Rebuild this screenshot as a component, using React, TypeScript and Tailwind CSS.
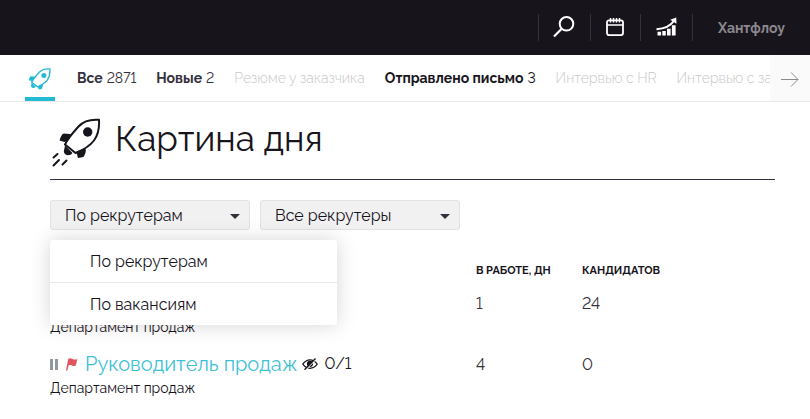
import { useState } from 'react';
import type { ReactNode } from 'react';

// ═══════════════════════════════════════════════════════════════════════════
// DATA
// ═══════════════════════════════════════════════════════════════════════════

interface Stage {
  title: string;
  count?: number;
  tone: 'dark' | 'active' | 'muted';
}

interface Vacancy {
  id: number;
  title?: string;
  department: string;
  progress?: string;
  days: number;
  candidates: number;
}

const STAGES: Stage[] = [
  { title: 'Все', count: 2871, tone: 'dark' },
  { title: 'Новые', count: 2, tone: 'dark' },
  { title: 'Резюме у заказчика', tone: 'muted' },
  { title: 'Отправлено письмо', count: 3, tone: 'active' },
  { title: 'Интервью с HR', tone: 'muted' },
  { title: 'Интервью с заказчиком', tone: 'muted' },
];

const VACANCIES: Vacancy[] = [
  { id: 1, department: 'Департамент продаж', days: 1, candidates: 24 },
  { id: 2, title: 'Руководитель продаж', department: 'Департамент продаж', progress: '0/1', days: 4, candidates: 0 },
];

const GROUPINGS = ['По рекрутерам', 'По вакансиям'];

const TONES = {
  dark: 'text-[#34313d]',
  active: 'text-[#17141c]',
  muted: 'text-[#c8c8c8]',
};

// ═══════════════════════════════════════════════════════════════════════════
// COMPONENT
// ═══════════════════════════════════════════════════════════════════════════

export default function App() {
  const [grouping, setGrouping] = useState(GROUPINGS[0]);
  const [menuOpen, setMenuOpen] = useState(true);

  return (
    <div className="overflow-hidden bg-white font-['Raleway','Lato',sans-serif] text-[#17141c] lining-nums">
      <TopBar />
      <StageNav />

      <main className="pr-[35px] pl-[50px]">
        <div className="flex h-[78px] items-start gap-3.5 border-b border-[#34313d] pt-4 pl-0.5">
          <RocketIcon className="h-[49px] w-[49px] shrink-0" flames />
          <h1 className="text-[35px] leading-[42px]">Картина дня</h1>
        </div>

        <div className="relative mt-5 flex gap-2.5">
          <FilterSelect
            label="Группировка"
            value={grouping}
            options={GROUPINGS}
            onChange={setGrouping}
          />
          <FilterSelect label="Рекрутеры" value="Все рекрутеры" options={['Все рекрутеры']} />

          {menuOpen && (
            <ul className="absolute top-10 left-0 z-10 w-[287px] divide-y divide-[#e8e8e8] rounded-[3px] bg-white shadow-[0_0_20px_rgba(0,0,0,0.17)]">
              {GROUPINGS.map((item) => (
                <li key={item}>
                  <button
                    type="button"
                    className="h-[42px] w-full px-10 pt-0.5 text-left text-base"
                    onClick={() => {
                      setGrouping(item);
                      setMenuOpen(false);
                    }}
                  >
                    {item}
                  </button>
                </li>
              ))}
            </ul>
          )}
        </div>

        <table className="mt-[29px] w-full table-fixed text-left">
          <thead>
            <tr className="h-6 text-[11px] font-bold">
              <th className="w-[426px]">
                <span className="sr-only">Вакансия</span>
              </th>
              <th className="w-[106px]">В РАБОТЕ, ДН</th>
              <th>КАНДИДАТОВ</th>
            </tr>
          </thead>
          <tbody>
            {VACANCIES.map((vacancy) => (
              <VacancyRow key={vacancy.id} vacancy={vacancy} />
            ))}
          </tbody>
        </table>
      </main>
    </div>
  );
}

// ═══════════════════════════════════════════════════════════════════════════
// HELPER COMPONENTS
// ═══════════════════════════════════════════════════════════════════════════

function TopBar() {
  return (
    <header className="flex h-[55px] items-center justify-end bg-[#17141c] pr-[25px] text-white">
      <BarButton label="Поиск" width="w-[52px]">
        <svg viewBox="0 0 22 22" className="mb-0.5 h-[22px] w-[22px]" fill="none" stroke="currentColor" strokeWidth="2">
          <circle cx="13.5" cy="7.8" r="6.8" />
          <path d="M8.700 12.700 1 20.500" strokeWidth="2.200" />
        </svg>
      </BarButton>
      <BarButton label="Календарь" width="w-[50px]">
        <svg viewBox="0 0 18 18" className="mb-0.5 h-[18px] w-[18px]" fill="none" stroke="currentColor" strokeWidth="1.8">
          <rect x="1" y="2.3" width="16" height="14.8" rx="2" />
          <path d="M1 7h16M4.500 0v4.500M7.500 0v4.500M10.500 0v4.500M13.500 0v4.500" strokeWidth="1.500" />
        </svg>
      </BarButton>
      <BarButton label="Отчёты" width="w-[52px]">
        <svg viewBox="0 0 21 19" className="mb-0.5 h-[19px] w-[21px]" fill="currentColor">
          <path d="M1.500 14.800h3.600V18.400H1.500zM6.300 14h3.500v4.400H6.300zM11 11.800h3.600v6.600H11zM15.900 8.300h3.700v10.100h-3.700z" />
          <path d="M.5 12.200C8 12 14.500 9 18.500 3.300" fill="none" stroke="currentColor" strokeWidth="2" />
          <path d="m14.200 2.700 6-2.200.3 6.300z" />
        </svg>
      </BarButton>
      <span className="h-[27px] w-px bg-[#34313a]" />
      <a href="#account" className="ml-[25px] text-sm font-bold text-[#8b898e]">
        Хантфлоу
      </a>
    </header>
  );
}

function BarButton({ label, width, children }: { label: string; width: string; children: ReactNode }) {
  return (
    <button
      type="button"
      aria-label={label}
      className={`flex h-[27px] items-center justify-center border-l border-[#34313a] ${width}`}
    >
      {children}
    </button>
  );
}

function StageNav() {
  return (
    <nav className="flex h-[47px] border-b border-[#e8e8e8] text-sm">
      <a
        href="#today"
        aria-label="Картина дня"
        className="ml-[25px] flex w-[30px] shrink-0 items-center justify-center border-b-4 border-[#23bad3] pt-1.5 text-[#23bad3]"
      >
        <RocketIcon className="h-[22px] w-[22px]" />
      </a>
      <div className="ml-[22px] flex min-w-0 flex-1 items-center gap-5 overflow-hidden whitespace-nowrap">
        {STAGES.map((stage) => (
          <a key={stage.title} href="#stage" className={`flex shrink-0 gap-1 ${TONES[stage.tone]}`}>
            <span className={stage.tone === 'muted' ? 'font-light' : 'font-bold'}>{stage.title}</span>
            {stage.count !== undefined && <span>{stage.count}</span>}
          </a>
        ))}
      </div>
      <button
        type="button"
        aria-label="Вперёд"
        className="flex w-10 shrink-0 items-center justify-center bg-[#fafafa] text-[#8b8b8b]"
      >
        <svg viewBox="0 0 18 16" className="mt-1 h-4 w-[18px]" fill="none" stroke="currentColor">
          <path d="M0 7.500h17M10 .5 17 7.500 10 14.500" />
        </svg>
      </button>
    </nav>
  );
}

function FilterSelect({
  label,
  value,
  options,
  onChange,
}: {
  label: string;
  value: string;
  options: string[];
  onChange?: (value: string) => void;
}) {
  return (
    <label className="grid w-[200px] items-center">
      <span className="sr-only">{label}</span>
      <select
        value={value}
        onChange={(e) => onChange?.(e.target.value)}
        className="col-start-1 row-start-1 h-[30px] w-full appearance-none rounded-[3px] border border-[#e2e2e2] bg-[#f1f1f1] px-3.5 pt-0.5 text-base"
      >
        {options.map((option) => (
          <option key={option}>{option}</option>
        ))}
      </select>
      <svg
        viewBox="0 0 10 5"
        className="pointer-events-none col-start-1 row-start-1 mt-0.5 mr-2.5 h-[5px] w-2.5 justify-self-end"
        fill="#34313d"
      >
        <path d="M0 0h10L5 5z" />
      </svg>
    </label>
  );
}

function VacancyRow({ vacancy }: { vacancy: Vacancy }) {
  return (
    <tr className="h-[61px] align-top">
      <td className="pt-1.5">
        <div className="flex h-7 items-center">
          {vacancy.title && (
            <>
              <PauseIcon />
              <FlagIcon />
              <a href="#vacancy" className="ml-[7px] text-xl text-[#3dbfd6]">
                {vacancy.title}
              </a>
              <EyeOffIcon />
              <span className="ml-[7px] text-base">{vacancy.progress}</span>
            </>
          )}
        </div>
        <div className="text-sm">{vacancy.department}</div>
      </td>
      <td className="pt-[9px] text-base text-[#34313d]">{vacancy.days}</td>
      <td className="pt-[9px] text-base text-[#34313d]">{vacancy.candidates}</td>
    </tr>
  );
}

function PauseIcon() {
  return (
    <svg viewBox="0 0 8 11" className="h-[11px] w-2" fill="#929a9d">
      <path d="M0 0h3v11H0zM5 0h3v11H5z" />
    </svg>
  );
}

function FlagIcon() {
  return (
    <svg viewBox="0 0 12 13" className="ml-2 h-[13px] w-3" fill="#df5560">
      <path d="M2.300.8C4-.2 5.200.2 6.400.9c1.400.8 3 .9 5 .1L9.800 7.400C8 8.200 6.500 8 5.200 7.300 4.200 6.800 3.400 6.800 2.700 7.200L1.400 12.500H0z" />
    </svg>
  );
}

function EyeOffIcon() {
  return (
    <svg viewBox="0 0 16 12" className="ml-1 h-3 w-4" fill="none" stroke="#17141c" strokeWidth="1.2">
      <path d="M.8 6.200C3 3 5.300 1.800 8 1.800s5 1.200 7.200 4.400C13 9.200 10.700 10.300 8 10.300S3 9.200.8 6.200z" />
      <circle cx="8" cy="5.800" r="2.500" fill="#17141c" />
      <path d="M3.600 11.800 14.300.8" stroke="#fff" strokeWidth="1.200" />
      <path d="M2.500 11.800 13.500.5" strokeWidth="1.300" />
    </svg>
  );
}

function RocketIcon({ className, flames = false }: { className: string; flames?: boolean }) {
  return (
    <svg
      viewBox={flames ? '0 0 49 49' : '8 0 41 41'}
      className={className}
      fill="none"
      stroke="currentColor"
      strokeWidth={flames ? 2 : 2.6}
    >
      <path
        d="M47 1.800C39 1.200 31.500 3 26.500 8.500 21.500 14 16 20 13 26.500L23.500 35C31 32 37.500 28.500 42 22.500c4-5.500 5.500-12 5-20.700z"
        strokeLinejoin="round"
      />
      <circle cx="35.700" cy="14" r="4.700" fill="currentColor" stroke="none" />
      <path
        d="M19.500 16.200 12 15.500C10 15.700 9 18 7.500 22.500l5 1.500 3-1.200zM33.500 30.500c1 3-.5 6-2 8.500l-5.500 1-1.500-5.500zM13 27.500l7.500 7.500c-1 1.500-3 2.300-5 2.200-2-.2-3.500-2-3.700-3.700z"
        fill="currentColor"
        stroke="none"
      />
      {flames && <path d="M1.500 39.500 5.500 36M1.500 47.500l5.500-5.500M10.500 46.500l4-4" strokeLinecap="round" />}
    </svg>
  );
}
